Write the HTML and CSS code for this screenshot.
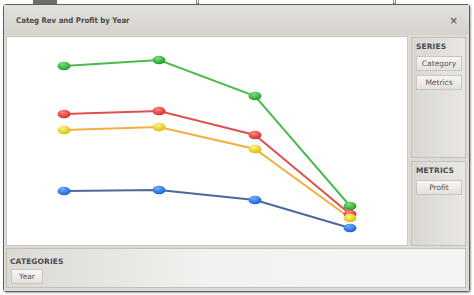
FILE: index.html
```html
<!DOCTYPE html>
<html>
<head>
<meta charset="utf-8">
<link rel="stylesheet" href="styles.css">
</head>
<body>
<div class="backdrop">
  <div class="tab"></div>
  <div class="tick tick-a"></div>
  <div class="tick tick-b"></div>
</div>
<div class="window">
  <div class="titlebar">
    <span class="title">Categ Rev and Profit by Year</span>
    <span class="close">×</span>
  </div>
  <div class="content">
    <div class="chart">
      <svg width="402" height="210" viewBox="0 0 402 210">
        <defs>
          <radialGradient id="gG" cx="0.4" cy="0.3" r="0.7">
            <stop offset="0" stop-color="#7fe07f"/>
            <stop offset="1" stop-color="#1f9a2a"/>
          </radialGradient>
          <radialGradient id="gR" cx="0.4" cy="0.3" r="0.7">
            <stop offset="0" stop-color="#ff8a80"/>
            <stop offset="1" stop-color="#d42a25"/>
          </radialGradient>
          <radialGradient id="gY" cx="0.4" cy="0.3" r="0.7">
            <stop offset="0" stop-color="#fff488"/>
            <stop offset="1" stop-color="#d9bd08"/>
          </radialGradient>
          <radialGradient id="gB" cx="0.4" cy="0.3" r="0.7">
            <stop offset="0" stop-color="#6fb0ff"/>
            <stop offset="1" stop-color="#1860d8"/>
          </radialGradient>
        </defs>
        <polyline points="58,30 153,24 249,60 344,170" fill="none" stroke="#4cbb4c" stroke-width="2"/>
        <polyline points="58,78 153,75 249,99 344,178" fill="none" stroke="#e05050" stroke-width="2"/>
        <polyline points="58,94 153,91 249,113 344,182" fill="none" stroke="#f0b040" stroke-width="2"/>
        <polyline points="58,155 153,154 249,164 344,192" fill="none" stroke="#4a6a9a" stroke-width="2"/>
        <g>
          <ellipse cx="58" cy="30" rx="6.5" ry="4.3" fill="url(#gG)"/>
          <ellipse cx="153" cy="24" rx="6.5" ry="4.3" fill="url(#gG)"/>
          <ellipse cx="249" cy="60" rx="6.5" ry="4.3" fill="url(#gG)"/>
          <ellipse cx="344" cy="170" rx="6.5" ry="4.3" fill="url(#gG)"/>
          <ellipse cx="58" cy="78" rx="6.5" ry="4.3" fill="url(#gR)"/>
          <ellipse cx="153" cy="75" rx="6.5" ry="4.3" fill="url(#gR)"/>
          <ellipse cx="249" cy="99" rx="6.5" ry="4.3" fill="url(#gR)"/>
          <ellipse cx="344" cy="178" rx="6.5" ry="4.3" fill="url(#gR)"/>
          <ellipse cx="58" cy="94" rx="6.5" ry="4.3" fill="url(#gY)"/>
          <ellipse cx="153" cy="91" rx="6.5" ry="4.3" fill="url(#gY)"/>
          <ellipse cx="249" cy="113" rx="6.5" ry="4.3" fill="url(#gY)"/>
          <ellipse cx="344" cy="182" rx="6.5" ry="4.3" fill="url(#gY)"/>
          <ellipse cx="58" cy="155" rx="6.5" ry="4.3" fill="url(#gB)"/>
          <ellipse cx="153" cy="154" rx="6.5" ry="4.3" fill="url(#gB)"/>
          <ellipse cx="249" cy="164" rx="6.5" ry="4.3" fill="url(#gB)"/>
          <ellipse cx="344" cy="192" rx="6.5" ry="4.3" fill="url(#gB)"/>
        </g>
      </svg>
    </div>
    <div class="side">
      <div class="panel series">
        <div class="panel-label">SERIES</div>
        <div class="btn">Category</div>
        <div class="btn">Metrics</div>
      </div>
      <div class="panel metrics">
        <div class="panel-label">METRICS</div>
        <div class="btn">Profit</div>
      </div>
    </div>
    <div class="categories">
      <div class="panel-label">CATEGORIES</div>
      <div class="btn btn-year">Year</div>
    </div>
  </div>
</div>
</body>
</html>
```
FILE: styles.css
```css
html, body {
  margin: 0;
  padding: 0;
  background: #ffffff;
  width: 474px;
  height: 295px;
  overflow: hidden;
  font-family: "DejaVu Sans", "Liberation Sans", sans-serif;
}
.backdrop {
  position: absolute;
  left: 0;
  top: 0;
  width: 474px;
  height: 6px;
}
.tab {
  position: absolute;
  left: 33px;
  top: 0;
  width: 24px;
  height: 4px;
  background: #6e6e6e;
}
.tick {
  position: absolute;
  top: 0;
  width: 1px;
  height: 3px;
  border: 1px solid #8a8a8a;
  border-top: none;
  background: #fff;
}
.tick-a { left: 196px; }
.tick-b { left: 393px; }
.window {
  position: relative;
  margin: 4px 0 0 3px;
  width: 465px;
  height: 286px;
  border: 1px solid #5e5e5e;
  border-radius: 3px;
  box-shadow: 1px 1px 2px rgba(0,0,0,0.35);
  background: #e4e2de;
  display: flex;
  flex-direction: column;
}
.titlebar {
  height: 30px;
  flex: none;
  display: flex;
  align-items: center;
  justify-content: space-between;
  padding: 0 11px 0 12px;
  background: linear-gradient(to bottom, #e2e0db, #d6d3cd);
}
.title {
  font-family: "DejaVu Sans Condensed", "DejaVu Sans", sans-serif;
  font-stretch: condensed;
  font-size: 7.8px;
  font-weight: bold;
  color: #4b4b4b;
}
.close {
  font-size: 10px;
  color: #666;
  font-weight: bold;
}
.content {
  flex: 1;
  display: grid;
  grid-template-columns: 402px 55px;
  grid-template-rows: 210px 40px;
  column-gap: 3px;
  row-gap: 2px;
  padding: 1px 3px 3px 2px;
  background: #dedbd6;
}
.chart {
  background: #ffffff;
  border: 1px solid #c9c7c2;
  box-sizing: border-box;
  overflow: hidden;
}
.chart svg { display: block; margin: -1px 0 0 -1px; }
.side {
  display: flex;
  flex-direction: column;
  gap: 3px;
  padding-top: 1px;
}
.panel {
  border: 1px solid #c3c0ba;
  background: linear-gradient(to right, #dad7d1, #e9e7e3);
  box-sizing: border-box;
  padding: 2px 3px;
}
.series { height: 121px; }
.metrics { flex: 1; }
.panel-label {
  font-size: 7.5px;
  font-weight: bold;
  color: #4a4a55;
  margin: 2px 0 5px 1px;
  letter-spacing: 0.1px;
}
.btn {
  font-size: 7.5px;
  color: #555;
  text-align: center;
  border: 1px solid #c8c6c1;
  background: linear-gradient(to bottom, #f7f6f4, #e3e1dd);
  height: 13px;
  line-height: 13px;
  margin: 0 0 4px 1px;
  width: 44px;
  box-sizing: content-box;
}
.categories {
  grid-column: 1 / 3;
  border: 1px solid #c3c0ba;
  background: linear-gradient(to right, #dcd9d3, #f2f2f0 45%, #f4f4f3);
  box-sizing: border-box;
  padding: 2px 3px;
}
.categories .panel-label { margin: 6px 0 3px 0; }
.btn-year { width: 30px; margin-left: 1px; }
```
